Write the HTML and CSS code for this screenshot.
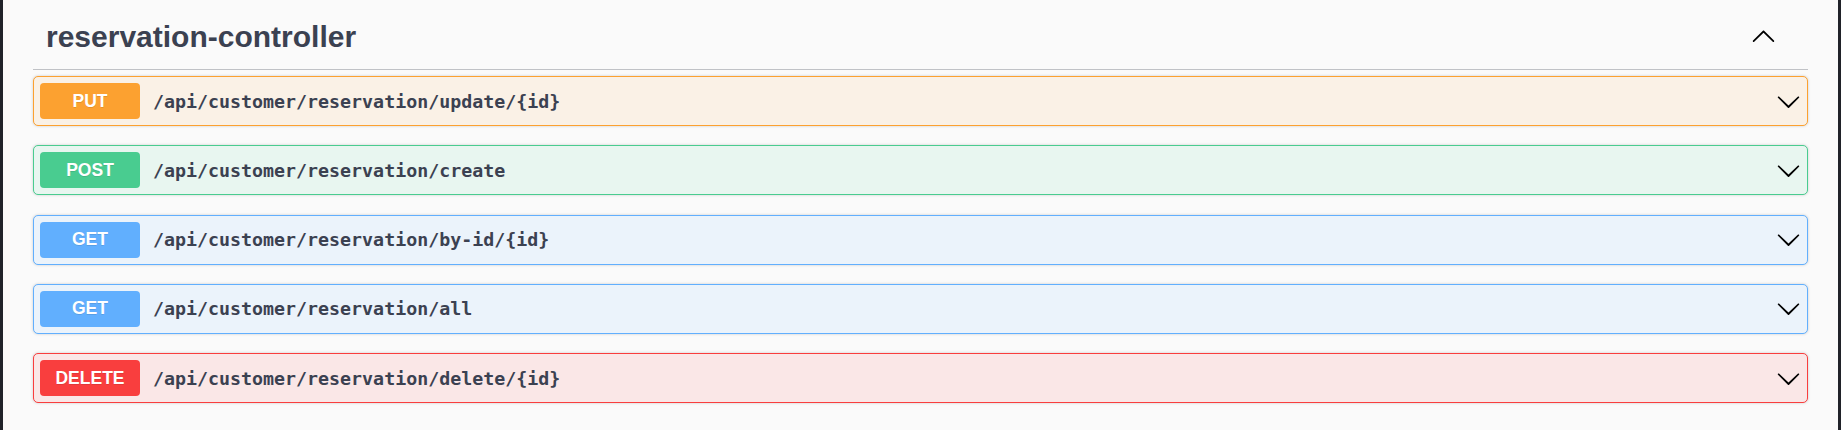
FILE: index.html
```html
<!DOCTYPE html>
<html>
<head>
<meta charset="utf-8">
<link rel="stylesheet" href="styles.css">
</head>
<body>
<div class="frame">
  <div class="edge"></div>
  <main class="page">
    <section class="tag-section">
      <h3 class="tag">
        <span class="tag-name">reservation-controller</span>
        <button class="tag-toggle" aria-label="collapse">
          <svg viewBox="0 0 20 20" width="25" height="25"><path d="M17.418 14.908c.272.268.709.268.979 0s.271-.701 0-.969l-7.908-7.83c-.27-.268-.707-.268-.979 0l-7.908 7.83c-.27.268-.27.701 0 .969.271.268.709.268.979 0L10 7.767l7.418 7.141z"/></svg>
        </button>
      </h3>
      <div class="ops">
        <div class="op op-put">
          <span class="method">PUT</span>
          <span class="path">/api/customer/reservation/update/{id}</span>
          <svg class="arrow" viewBox="0 0 20 20" width="25" height="25"><path d="M17.418 6.109c.272-.268.709-.268.979 0s.271.701 0 .969l-7.908 7.83c-.27.268-.707.268-.979 0l-7.908-7.83c-.27-.268-.27-.701 0-.969.271-.268.709-.268.979 0L10 13.25l7.418-7.141z"/></svg>
        </div>
        <div class="op op-post">
          <span class="method">POST</span>
          <span class="path">/api/customer/reservation/create</span>
          <svg class="arrow" viewBox="0 0 20 20" width="25" height="25"><path d="M17.418 6.109c.272-.268.709-.268.979 0s.271.701 0 .969l-7.908 7.83c-.27.268-.707.268-.979 0l-7.908-7.83c-.27-.268-.27-.701 0-.969.271-.268.709-.268.979 0L10 13.25l7.418-7.141z"/></svg>
        </div>
        <div class="op op-get">
          <span class="method">GET</span>
          <span class="path">/api/customer/reservation/by-id/{id}</span>
          <svg class="arrow" viewBox="0 0 20 20" width="25" height="25"><path d="M17.418 6.109c.272-.268.709-.268.979 0s.271.701 0 .969l-7.908 7.83c-.27.268-.707.268-.979 0l-7.908-7.83c-.27-.268-.27-.701 0-.969.271-.268.709-.268.979 0L10 13.25l7.418-7.141z"/></svg>
        </div>
        <div class="op op-get">
          <span class="method">GET</span>
          <span class="path">/api/customer/reservation/all</span>
          <svg class="arrow" viewBox="0 0 20 20" width="25" height="25"><path d="M17.418 6.109c.272-.268.709-.268.979 0s.271.701 0 .969l-7.908 7.83c-.27.268-.707.268-.979 0l-7.908-7.83c-.27-.268-.27-.701 0-.969.271-.268.709-.268.979 0L10 13.25l7.418-7.141z"/></svg>
        </div>
        <div class="op op-delete">
          <span class="method">DELETE</span>
          <span class="path">/api/customer/reservation/delete/{id}</span>
          <svg class="arrow" viewBox="0 0 20 20" width="25" height="25"><path d="M17.418 6.109c.272-.268.709-.268.979 0s.271.701 0 .969l-7.908 7.83c-.27.268-.707.268-.979 0l-7.908-7.83c-.27-.268-.27-.701 0-.969.271-.268.709-.268.979 0L10 13.25l7.418-7.141z"/></svg>
        </div>
      </div>
    </section>
  </main>
  <div class="edge"></div>
</div>
</body>
</html>
```

FILE: styles.css
```css
html, body {
  margin: 0;
  padding: 0;
  height: 100%;
}
body {
  background: #fafafa;
  font-family: "Liberation Sans", Arial, sans-serif;
  color: #3b4151;
  overflow: hidden;
}
.frame {
  display: flex;
  height: 430px;
}
.edge {
  width: 3px;
  flex: 0 0 3px;
  background: #202229;
}
.page {
  flex: 1;
  padding: 0 30px;
  background: #fafafa;
}
.tag {
  margin: 0;
  height: 69px;
  box-sizing: border-box;
  display: flex;
  align-items: center;
  padding: 4px 32px 0 13px;
  border-bottom: 1px solid rgba(59, 65, 81, 0.3);
  height: 70px;
}
.tag-name {
  flex: 1;
  font-size: 30px;
  font-weight: 700;
  color: #3b4151;
  line-height: 1;
}
.tag-toggle {
  border: 0;
  background: none;
  padding: 0;
  width: 25px;
  height: 25px;
  margin-top: -3px;
  display: flex;
}
.tag-toggle svg { fill: #000; }
.ops {
  display: flex;
  flex-direction: column;
  gap: 19.25px;
  padding-top: 6px;
}
.op {
  box-sizing: border-box;
  height: 50px;
  display: flex;
  align-items: center;
  padding: 0 6px;
  border: 1px solid;
  border-radius: 5px;
  box-shadow: 0 0 3px rgba(0, 0, 0, 0.19);
}
.method {
  flex: 0 0 100px;
  height: 36px;
  border-radius: 4px;
  display: flex;
  align-items: center;
  justify-content: center;
  color: #fff;
  font-family: "Liberation Sans", Arial, sans-serif;
  font-weight: 700;
  font-size: 17.5px;
  text-shadow: 0 1px 0 rgba(0, 0, 0, 0.1);
}
.path {
  flex: 1;
  padding-left: 13px;
  font-family: "DejaVu Sans Mono", "Liberation Mono", monospace;
  font-weight: 600;
  font-size: 18.3px;
  color: #3b4151;
}
.arrow {
  fill: #000;
  flex: 0 0 25px;
}
.op-put { background: #faf1e6; border-color: #fca130; }
.op-put .method { background: #fca130; }
.op-post { background: #e8f6f0; border-color: #49cc90; }
.op-post .method { background: #49cc90; }
.op-get { background: #ebf3fb; border-color: #61affe; }
.op-get .method { background: #61affe; }
.op-delete { background: #fae7e7; border-color: #f93e3e; }
.op-delete .method { background: #f93e3e; }
```
